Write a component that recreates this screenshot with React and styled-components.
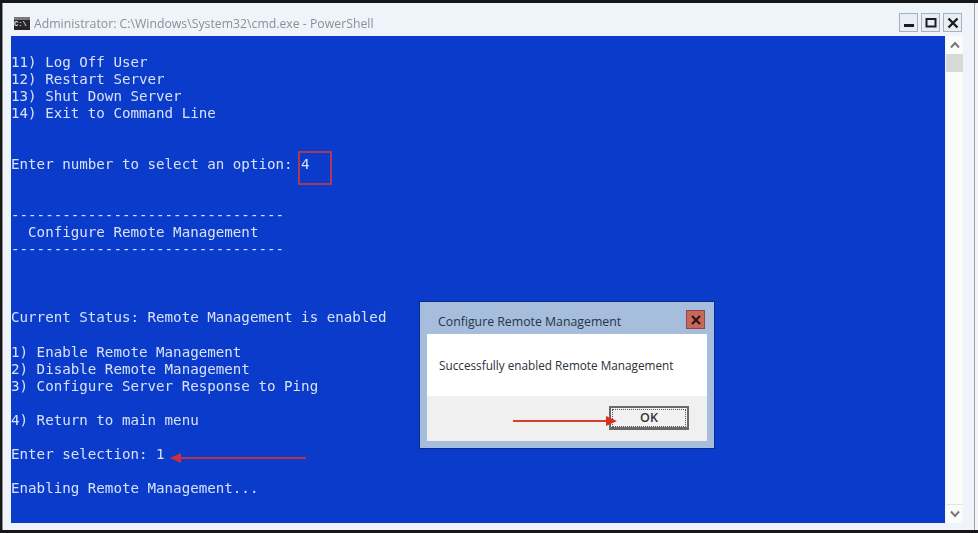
import React from "react"
import styled, { createGlobalStyle } from "styled-components"

const lines = `11) Log Off User
12) Restart Server
13) Shut Down Server
14) Exit to Command Line


Enter number to select an option: 4


--------------------------------
  Configure Remote Management
--------------------------------



Current Status: Remote Management is enabled

1) Enable Remote Management
2) Disable Remote Management
3) Configure Server Response to Ping

4) Return to main menu

Enter selection: 1

Enabling Remote Management...`

const App = () => (
    <>
        <Global />
        <Frame>
            <Window>
                <TitleBar>
                    <CmdIcon>C:\</CmdIcon>
                    <TitleText>Administrator: C:\Windows\System32\cmd.exe - PowerShell</TitleText>
                    <Controls>
                        <ControlButton>
                            <svg width="14" height="12" viewBox="0 0 14 12">
                                <rect x="2" y="7" width="10" height="3" fill="#1c1c1e" />
                            </svg>
                        </ControlButton>
                        <ControlButton>
                            <svg width="14" height="12" viewBox="0 0 14 12">
                                <rect x="2.5" y="2" width="9" height="7.5" fill="none" stroke="#1c1c1e" strokeWidth="2" />
                            </svg>
                        </ControlButton>
                        <ControlButton>
                            <svg width="14" height="12" viewBox="0 0 14 12">
                                <path d="M2.5 1.5 L11.5 10.5 M11.5 1.5 L2.5 10.5" stroke="#1c1c1e" strokeWidth="2.4" />
                            </svg>
                        </ControlButton>
                    </Controls>
                </TitleBar>
                <Body>
                    <Console>
                        <Output>{lines}</Output>
                        <OptionBox />
                        <SelectionArrow width="138" height="12" viewBox="0 0 138 12">
                            <path d="M10 6 H136" stroke="#b8324a" strokeWidth="2" />
                            <path d="M0 6 L11 1 V11 Z" fill="#cf2f3a" />
                        </SelectionArrow>
                        <Dialog>
                            <DialogTitle>
                                <span>Configure Remote Management</span>
                                <DialogClose>
                                    <svg width="12" height="12" viewBox="0 0 12 12">
                                        <path d="M2 2 L10 10 M10 2 L2 10" stroke="#2a1512" strokeWidth="2.2" />
                                    </svg>
                                </DialogClose>
                            </DialogTitle>
                            <DialogMessage>Successfully enabled Remote Management</DialogMessage>
                            <DialogFooter>
                                <FooterArrow width="104" height="12" viewBox="0 0 104 12">
                                    <path d="M0 6 H94" stroke="#d8402c" strokeWidth="2" />
                                    <path d="M104 6 L93 1 V11 Z" fill="#d8301f" />
                                </FooterArrow>
                                <OkButton>OK</OkButton>
                            </DialogFooter>
                        </Dialog>
                    </Console>
                    <Scrollbar>
                        <ScrollArrow>
                            <svg width="12" height="8" viewBox="0 0 12 8">
                                <path d="M2 6.5 L6 2 L10 6.5" fill="none" stroke="#77777c" strokeWidth="2" />
                            </svg>
                        </ScrollArrow>
                        <ScrollThumb />
                        <ScrollTrack />
                        <ScrollArrow>
                            <svg width="12" height="8" viewBox="0 0 12 8">
                                <path d="M2 1.5 L6 6 L10 1.5" fill="none" stroke="#77777c" strokeWidth="2" />
                            </svg>
                        </ScrollArrow>
                    </Scrollbar>
                </Body>
            </Window>
        </Frame>
    </>
)

export default App

const Global = createGlobalStyle`
    html, body {
        margin: 0;
        padding: 0;
        background: #fff;
    }
`

const Frame = styled.div`
    width: 978px;
    height: 533px;
    box-sizing: border-box;
    padding: 3px 0 3px 2px;
    background: #17171a;
    overflow: hidden;
`

const Window = styled.div`
    height: 100%;
    width: 973px;
    display: flex;
    flex-direction: column;
    box-sizing: border-box;
    padding: 0 8px 7px 8px;
    background: #eff4fb;
    border-left: 1px solid #8d9096;
    border-right: 1px solid #9ea2a8;
    box-shadow: 3px 0 0 #f4f4f6;
    font-family: "Open Sans", "Liberation Sans", sans-serif;
    filter: blur(0.5px);
`

const TitleBar = styled.div`
    height: 33px;
    flex-shrink: 0;
    display: flex;
    align-items: center;
    padding-top: 6px;
    box-sizing: border-box;
`

const CmdIcon = styled.div`
    width: 16px;
    height: 10px;
    margin: 2px 4px 0 3px;
    background: #26262a;
    border-top: 3px solid #77777c;
    box-sizing: content-box;
    color: #e6e6e6;
    font: bold 7px/9px "Liberation Mono", monospace;
    overflow: hidden;
    flex-shrink: 0;
`

const TitleText = styled.div`
    flex: 1;
    color: #8b8f96;
    font-size: 12.27px;
    padding-top: 2px;
`

const Controls = styled.div`
    display: flex;
    gap: 3px;
    margin-right: 4px;
`

const ControlButton = styled.div`
    width: 19px;
    height: 19px;
    box-sizing: border-box;
    border: 1px solid #a8b2bf;
    display: flex;
    align-items: center;
    justify-content: center;
    background: #e9eef5;
`

const Body = styled.div`
    flex: 1;
    min-height: 0;
    display: flex;
    gap: 1px;
`

const Console = styled.div`
    position: relative;
    width: 934px;
    background: #0b3bcb;
    box-sizing: border-box;
    padding-top: 17.5px;
    overflow: hidden;
`

const Output = styled.pre`
    margin: 0;
    color: #d8e2f6;
    font-family: "DejaVu Sans Mono", monospace;
    font-size: 14.18px;
    line-height: 17.07px;
`

const OptionBox = styled.div`
    position: absolute;
    left: 287px;
    top: 115px;
    width: 34px;
    height: 34px;
    box-sizing: border-box;
    border: 2px solid #a8385c;
`

const SelectionArrow = styled.svg`
    position: absolute;
    left: 159px;
    top: 416px;
`

const Dialog = styled.div`
    position: absolute;
    left: 408px;
    top: 265px;
    width: 296px;
    height: 148px;
    box-sizing: border-box;
    padding: 0 7px 7px 7px;
    background: #a7bddc;
    border: 1px solid #0a2a8a;
    display: flex;
    flex-direction: column;
    color: #2d3038;
`

const DialogTitle = styled.div`
    height: 32px;
    flex-shrink: 0;
    display: flex;
    align-items: center;
    justify-content: space-between;
    padding: 6px 2px 0 11px;
    box-sizing: border-box;
    font-size: 12.3px;
    color: #283448;
`

const DialogClose = styled.div`
    width: 19px;
    height: 19px;
    background: #c8675c;
    border: 1px solid #8f4a48;
    box-sizing: border-box;
    display: flex;
    align-items: center;
    justify-content: center;
    margin-top: -3px;
`

const DialogMessage = styled.div`
    flex: 1;
    background: #fff;
    padding: 24px 0 0 12px;
    box-sizing: border-box;
    font-size: 11.75px;
    line-height: 15px;
    font-weight: 500;
`

const DialogFooter = styled.div`
    position: relative;
    height: 45px;
    flex-shrink: 0;
    background: #f0f0f0;
    display: flex;
    justify-content: flex-end;
    align-items: flex-start;
    padding: 10px 18px 0 0;
    box-sizing: border-box;
`

const FooterArrow = styled.svg`
    position: absolute;
    left: 86px;
    top: 19px;
    z-index: 1;
`

const OkButton = styled.div`
    width: 80px;
    height: 24px;
    box-sizing: border-box;
    background: #f2f2f2;
    border: 2px solid #6a6a6a;
    border-bottom-width: 3px;
    outline: 1px dotted #55555a;
    outline-offset: -4px;
    display: flex;
    align-items: center;
    justify-content: center;
    font-size: 12.5px;
    font-weight: 600;
    color: #333;
`

const Scrollbar = styled.div`
    width: 17px;
    background: #fbfbfa;
    display: flex;
    flex-direction: column;
`

const ScrollArrow = styled.div`
    height: 18px;
    flex-shrink: 0;
    display: flex;
    align-items: center;
    justify-content: center;
`

const ScrollThumb = styled.div`
    height: 18px;
    flex-shrink: 0;
    background: #d8d8d6;
`

const ScrollTrack = styled.div`
    flex: 1;
    border-bottom: 1px solid #e4e4e4;
`
